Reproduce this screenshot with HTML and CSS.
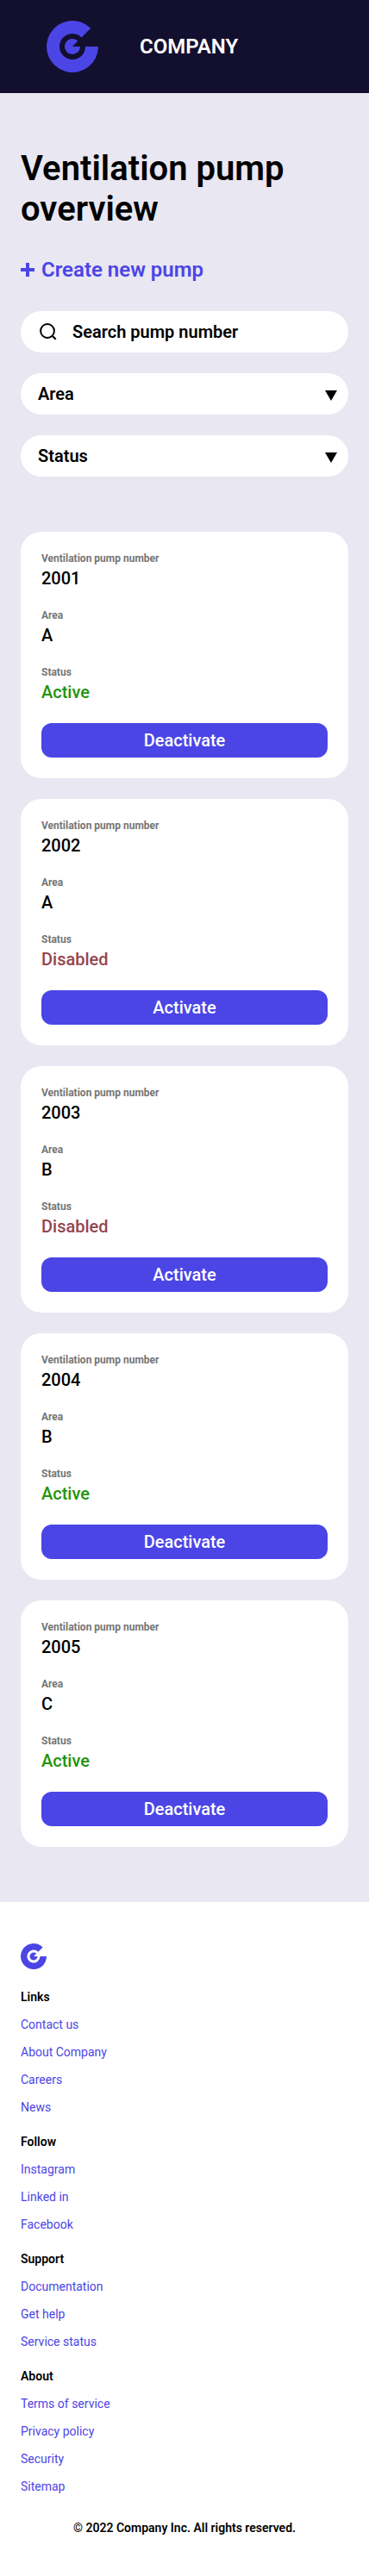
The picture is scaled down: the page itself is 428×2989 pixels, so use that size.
FILE: index.html
```html
<!DOCTYPE html>
<html lang="en">
<head>
<meta charset="utf-8">
<meta name="viewport" content="width=device-width, initial-scale=1">
<title>Ventilation pump overview</title>
<link rel="stylesheet" href="styles.css">
</head>
<body>
<header class="header">
  <svg class="header-logo" viewBox="0 0 60 60"><path d="M60 30A30 30 0 1 1 51.2 8.8L40.6 19.4A15 15 0 1 0 45 30Z"/><path d="M39 30A9 9 0 1 1 36.4 23.6L30 30Z"/></svg>
  <span class="brand">COMPANY</span>
</header>
<main class="main">
  <h1 class="title">Ventilation pump overview</h1>
  <a class="create"><svg class="plus" viewBox="0 0 16 16"><path d="M8 0V16M0 8H16"/></svg>Create new pump</a>
  <div class="filters">
    <div class="field search"><svg class="search-icon" viewBox="0 0 20 20"><circle cx="9" cy="9" r="7.9"/><path d="M14.5 14.5L18.7 18.7"/></svg>Search pump number</div>
    <div class="field select">Area<svg class="arrow" viewBox="0 0 14 12"><path d="M0 0H14L7 12Z"/></svg></div>
    <div class="field select">Status<svg class="arrow" viewBox="0 0 14 12"><path d="M0 0H14L7 12Z"/></svg></div>
  </div>
  <section class="cards">
    <article class="card">
      <div><p class="label">Ventilation pump number</p><p class="value">2001</p></div>
      <div><p class="label">Area</p><p class="value">A</p></div>
      <div><p class="label">Status</p><p class="value active">Active</p></div>
      <button class="button">Deactivate</button>
    </article>
    <article class="card">
      <div><p class="label">Ventilation pump number</p><p class="value">2002</p></div>
      <div><p class="label">Area</p><p class="value">A</p></div>
      <div><p class="label">Status</p><p class="value disabled">Disabled</p></div>
      <button class="button">Activate</button>
    </article>
    <article class="card">
      <div><p class="label">Ventilation pump number</p><p class="value">2003</p></div>
      <div><p class="label">Area</p><p class="value">B</p></div>
      <div><p class="label">Status</p><p class="value disabled">Disabled</p></div>
      <button class="button">Activate</button>
    </article>
    <article class="card">
      <div><p class="label">Ventilation pump number</p><p class="value">2004</p></div>
      <div><p class="label">Area</p><p class="value">B</p></div>
      <div><p class="label">Status</p><p class="value active">Active</p></div>
      <button class="button">Deactivate</button>
    </article>
    <article class="card">
      <div><p class="label">Ventilation pump number</p><p class="value">2005</p></div>
      <div><p class="label">Area</p><p class="value">C</p></div>
      <div><p class="label">Status</p><p class="value active">Active</p></div>
      <button class="button">Deactivate</button>
    </article>
  </section>
</main>
<footer class="footer">
  <svg class="footer-logo" viewBox="0 0 60 60"><path d="M60 30A30 30 0 1 1 51.2 8.8L40.6 19.4A15 15 0 1 0 45 30Z"/><path d="M39 30A9 9 0 1 1 36.4 23.6L30 30Z"/></svg>
  <nav class="group"><h2>Links</h2><a>Contact us</a><a>About Company</a><a>Careers</a><a>News</a></nav>
  <nav class="group"><h2>Follow</h2><a>Instagram</a><a>Linked in</a><a>Facebook</a></nav>
  <nav class="group"><h2>Support</h2><a>Documentation</a><a>Get help</a><a>Service status</a></nav>
  <nav class="group"><h2>About</h2><a>Terms of service</a><a>Privacy policy</a><a>Security</a><a>Sitemap</a></nav>
  <p class="copyright">© 2022 Company Inc. All rights reserved.</p>
</footer>
</body>
</html>
```
FILE: styles.css
```css
* { box-sizing: border-box; margin: 0; padding: 0; }
body { font-family: Roboto, "Liberation Sans", sans-serif; font-weight: 600; color: #000; background: #fff; }
svg { display: block; flex: none; }
.header { display: flex; align-items: center; gap: 48px; height: 108px; padding-left: 54px; background: #130f2e; color: #fff; }
.header-logo { width: 60px; height: 60px; fill: #4b45e6; }
.brand { font-size: 24px; line-height: 28px; }
.main { padding: 64px 24px; background: #e9e7f2; }
.title { font-size: 40px; line-height: 47px; font-weight: 600; }
.create { display: flex; align-items: center; gap: 8px; margin-top: 33px; font-size: 24px; line-height: 28px; color: #4b45e6; }
.plus { width: 16px; height: 16px; stroke: #4b45e6; stroke-width: 4; }
.filters { display: flex; flex-direction: column; gap: 24px; margin-top: 34px; }
.field { display: flex; align-items: center; height: 48px; border-radius: 24px; background: #fff; font-size: 20px; line-height: 24px; }
.search { gap: 18px; padding-left: 22px; }
.search-icon { width: 20px; height: 20px; fill: none; stroke: #000; stroke-width: 2; }
.select { justify-content: space-between; padding: 0 13px 0 20px; }
.arrow { width: 14px; height: 12px; margin-top: 4px; }
.cards { display: flex; flex-direction: column; gap: 24px; margin-top: 64px; }
.card { display: flex; flex-direction: column; gap: 24px; padding: 24px; border-radius: 24px; background: #fff; }
.label { margin-bottom: 4px; font-size: 12px; line-height: 14px; font-weight: 700; color: #757575; }
.value { font-size: 20px; line-height: 24px; font-weight: 500; }
.active { color: #23930b; }
.disabled { color: #944450; }
.button { height: 40px; border: 0; border-radius: 12px; background: #4b45e6; color: #fff; font: 500 20px/24px Roboto, "Liberation Sans", sans-serif; }
.footer { display: flex; flex-direction: column; gap: 24px; padding: 48px 24px; font-size: 14px; line-height: 16px; }
.footer-logo { width: 30px; height: 30px; fill: #4b45e6; }
.group { display: flex; flex-direction: column; gap: 16px; }
.group h2 { font-size: 14px; line-height: 16px; font-weight: 600; }
.group a { font-weight: 400; color: #4b45e6; }
.copyright { margin-top: 8px; text-align: center; }
```
